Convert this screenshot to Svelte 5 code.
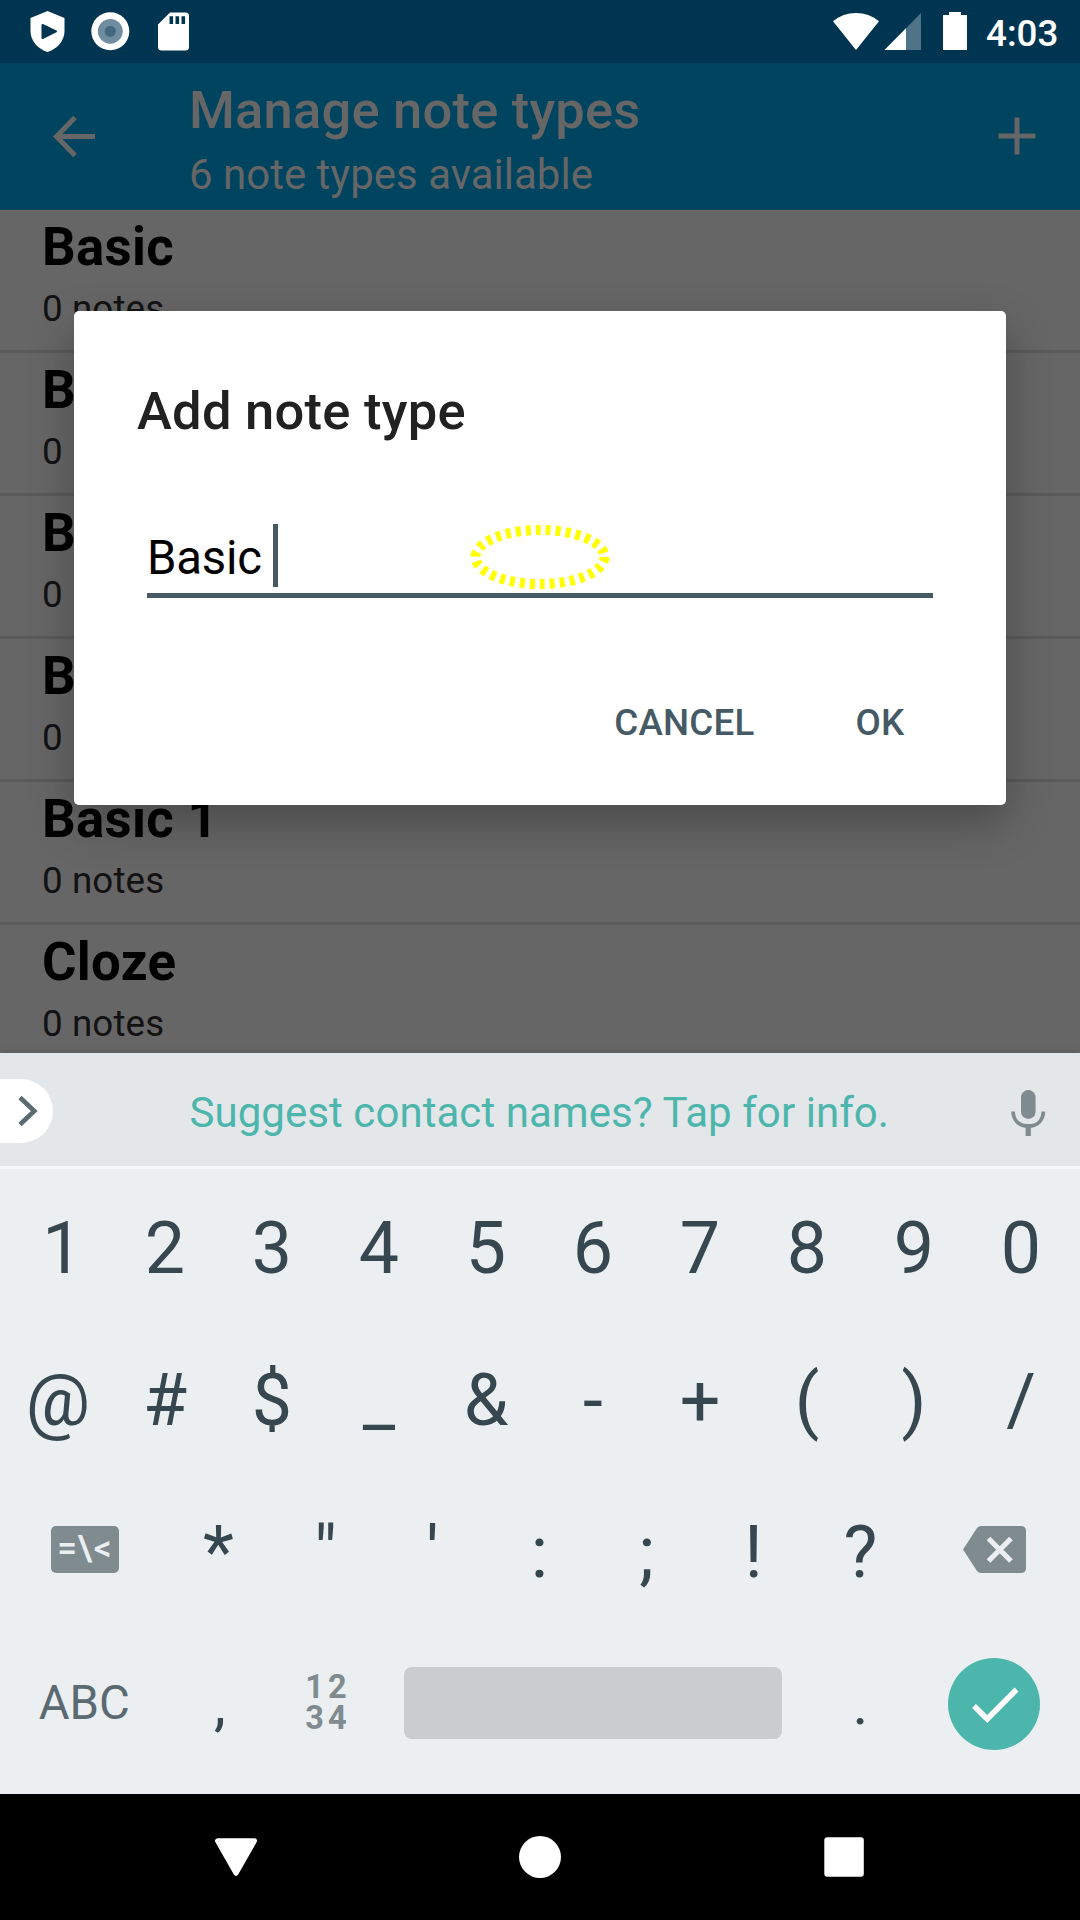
<script>
  const noteTypes = ['Basic', 'Basic (and reversed)', 'Basic (optional)', 'Basic (type in)', 'Basic 1', 'Cloze'];
  const digits = ['1', '2', '3', '4', '5', '6', '7', '8', '9', '0'];
  const symbols = ['@', '#', '$', '_', '&', '-', '+', '(', ')', '/'];
  const marks = ['*', '"', "'", ':', ';', '!', '?'];
</script>

<div class="screen">
  <header class="status">
    <svg class="left-icons" width="200" height="63" viewBox="0 0 200 63">
      <path fill="#fff" d="M47.500 11 L64.500 18 V31 C64.500 41 57 49 47.500 52 C38 49 30.500 41 30.500 31 V18 Z" />
      <path fill="#003552" stroke="#003552" stroke-width="2" stroke-linejoin="round" d="M42.500 25 L56 31.300 L42.500 38 Z" />
      <circle cx="110.300" cy="31.300" r="19" fill="#fff" />
      <circle cx="110.300" cy="31.300" r="12.400" fill="#708d9f" />
      <circle cx="110.300" cy="31.300" r="5.600" fill="#426981" />
      <path fill="#fff" d="M170 12.500 H185.500 Q189 12.500 189 16 V47 Q189 50.500 185.500 50.500 H161.500 Q158 50.500 158 47 V24.500 Z" />
      <path fill="#003552" d="M169.500 16.300h3.600v7.700h-3.600z M175.500 16.300h3.600v7.700h-3.600z M181.500 16.300h3.600v7.700h-3.600z" />
    </svg>
    <svg class="right-icons" width="140" height="63" viewBox="830 0 140 63">
      <path fill="#fff" d="M833 21.300 Q843 13 856 13 Q869 13 879 21.300 L856 50 Z" />
      <path fill="#4f7388" d="M921 13 V50 H884.500 Z" />
      <path fill="#fff" d="M906 28.300 V50 H884.500 Z" />
      <path fill="#fff" d="M949 12 H961 V15 H967 V50 H943 V15 H949 Z" />
    </svg>
    <span class="clock">4:03</span>
  </header>

  <div class="toolbar">
    <svg class="back" width="44" height="44" viewBox="52 115 44 44">
      <path fill="none" stroke="#666" stroke-width="5" d="M95 136.500 H57 M75 117.500 L56.500 136.500 L75 155.500" />
    </svg>
    <div class="titles">
      <h1>Manage note types</h1>
      <p>6 note types available</p>
    </div>
    <svg class="plus" width="38" height="38" viewBox="0 0 38 38">
      <path fill="none" stroke="#666" stroke-width="5" d="M.500 19 H37.500 M19 .500 V37.500" />
    </svg>
  </div>

  <main class="list">
    {#each noteTypes as name}
      <div class="item">
        <b>{name}</b>
        <span>0 notes</span>
      </div>
    {/each}
  </main>

  <section class="keyboard">
    <div class="strip">
      <div class="expand">
        <svg width="22" height="34" viewBox="0 0 22 34">
          <path fill="none" stroke="#5b6b72" stroke-width="4.600" d="M3 3.500 L17.300 17 L3 30.500" />
        </svg>
      </div>
      <span class="suggest">Suggest contact names? Tap for info.</span>
      <svg class="mic" width="36" height="48" viewBox="1010 1089 36 48">
        <rect x="1021" y="1090" width="14.600" height="29" rx="7.300" fill="#7f8b8f" />
        <path fill="none" stroke="#7f8b8f" stroke-width="3.800" d="M1013 1111.500 C1013.500 1121 1019.500 1126 1028.200 1126 C1037 1126 1043 1121 1043.400 1111.500" />
        <path stroke="#7f8b8f" stroke-width="5.200" d="M1028.200 1126 V1136" />
      </svg>
    </div>

    <div class="keys">
      <div class="row digits">
        {#each digits as key}<span class="key">{key}</span>{/each}
      </div>
      <div class="row">
        {#each symbols as key}<span class="key">{key}</span>{/each}
      </div>
      <div class="row">
        <span class="key wide"><span class="more"><i>=</i><i>\</i><i>&lt;</i></span></span>
        {#each marks as key}<span class="key">{key}</span>{/each}
        <span class="key wide">
          <svg class="erase" width="63" height="47" viewBox="0 0 63 47">
            <path fill="#7f8b8f" d="M18 0 H58 Q63 0 63 5 V42 Q63 47 58 47 H18 Q15.500 47 14 45 L0 23.500 L14 2 Q15.500 0 18 0 Z" />
            <path stroke="#ebeff2" stroke-width="5.200" d="M25.500 12.500 L48 35 M48 12.500 L25.500 35" />
          </svg>
        </span>
      </div>
      <div class="row bottom">
        <span class="key wide abc">ABC</span>
        <span class="key small comma">,</span>
        <span class="key numpad"><i>12</i><i>34</i></span>
        <span class="key spacebar"><span class="space"></span></span>
        <span class="key small">.</span>
        <span class="key wide">
          <svg class="enter" width="92" height="92" viewBox="0 0 92 92">
            <circle cx="46" cy="46" r="46" fill="#4db6ac" />
            <path fill="none" stroke="#fff" stroke-width="5.500" d="M26 48 L39.200 61 L68.500 31.500" />
          </svg>
        </span>
      </div>
    </div>
  </section>

  <nav class="nav">
    <svg width="1080" height="126" viewBox="0 0 1080 126">
      <path fill="#fff" stroke="#fff" stroke-width="5" stroke-linejoin="round" d="M217.500 46.800 H254.500 L236 79.300 Z" />
      <circle cx="540" cy="63" r="21" fill="#fff" />
      <rect x="824.300" y="43.300" width="39.500" height="39.500" rx="3" fill="#fff" />
    </svg>
  </nav>

  <div class="dialog">
    <h2>Add note type</h2>
    <div class="field"><span>Basic</span><span class="cursor"></span></div>
    <div class="actions">
      <span>CANCEL</span>
      <span>OK</span>
    </div>
    <svg class="marker" width="140" height="66" viewBox="0 0 140 66">
      <ellipse cx="70" cy="33" rx="64.500" ry="27" fill="none" stroke="#ff0" stroke-width="10" stroke-dasharray="5 5" />
    </svg>
  </div>
</div>

<style>
  :global(body) {
    margin: 0;
  }
  .screen {
    position: relative;
    display: flex;
    flex-direction: column;
    width: 1080px;
    height: 1920px;
    overflow: hidden;
    background: #666;
    font-family: Roboto, 'Liberation Sans', sans-serif;
  }
  svg {
    display: block;
    flex: none;
  }
  h1, h2, p {
    margin: 0;
  }
  i {
    font-style: normal;
  }
  .status {
    display: flex;
    flex: none;
    height: 63px;
    background: #003552;
  }
  .right-icons {
    margin-left: 630px;
  }
  .clock {
    margin-left: 16px;
    color: #fff;
    font-size: 36.75px;
    font-weight: 500;
    line-height: 67px;
  }
  .toolbar {
    display: flex;
    flex: none;
    height: 147px;
    background: #004460;
    color: #666;
  }
  .back {
    margin: 52px 0 0 52px;
  }
  .titles {
    flex: 1;
    margin-left: 93px;
    padding-top: 16px;
  }
  h1 {
    font-size: 52.5px;
    font-weight: 500;
    line-height: 62px;
    letter-spacing: 0.2px;
  }
  .titles p {
    margin-top: 9px;
    font-size: 42px;
    line-height: 50px;
  }
  .plus {
    margin: 54px 44px 0 0;
  }
  .list {
    flex: none;
    height: 843px;
    overflow: hidden;
  }
  .item {
    display: flex;
    flex-direction: column;
    box-sizing: border-box;
    height: 143px;
    padding: 6px 42px 0;
    border-bottom: 3px solid #5a5a5a;
    white-space: nowrap;
  }
  .item b {
    font-size: 52.8px;
    line-height: 62px;
    letter-spacing: 0.3px;
    color: #000;
  }
  .item span {
    margin-top: 9px;
    font-size: 36.75px;
    line-height: 44px;
    letter-spacing: 0.1px;
    color: #121212;
  }
  .keyboard {
    flex: none;
    height: 741px;
    background: #ebeff2;
    box-shadow: 0 0 8px rgba(0, 0, 0, 0.15);
  }
  .strip {
    display: flex;
    align-items: flex-start;
    height: 113px;
    border-bottom: 3px solid #f5f8fa;
    background: #e3e7ea;
  }
  .expand {
    display: flex;
    align-items: center;
    box-sizing: border-box;
    width: 52.5px;
    height: 64px;
    margin-top: 25.5px;
    padding-left: 16.5px;
    border-radius: 0 32px 32px 0;
    background: #fff;
  }
  .suggest {
    flex: 1;
    margin-left: 137px;
    color: #4db6ac;
    font-size: 42px;
    letter-spacing: 0.06px;
    line-height: 119px;
    white-space: nowrap;
  }
  .mic {
    margin: 36px 34px 0 0;
  }
  .keys {
    padding: 3.5px 5px 0 4.5px;
  }
  .row {
    display: flex;
    height: 152px;
  }
  .bottom {
    height: 149px;
  }
  .key {
    display: flex;
    align-items: center;
    justify-content: center;
    flex: none;
    box-sizing: border-box;
    width: 107px;
    color: #37474f;
    font-size: 71.7px;
    line-height: 84px;
  }
  .digits .key:first-child {
    padding-left: 9px;
  }
  .wide {
    width: 160.5px;
  }
  .more {
    display: grid;
    grid-template-columns: 19px 17px 19px;
    justify-content: center;
    width: 68px;
    height: 47px;
    margin-top: -6px;
    border-radius: 5px;
    background: #7f8b8f;
    color: #ebeff2;
    font-size: 35px;
    font-weight: 500;
    line-height: 45px;
    text-align: center;
  }
  .erase {
    margin-top: -6px;
  }
  .abc {
    padding-right: 1px;
    color: #5b6a71;
    font-size: 47.25px;
  }
  .small {
    padding-top: 2px;
    font-size: 60px;
  }
  .comma {
    padding-left: 3px;
  }
  .numpad {
    flex-direction: column;
    padding-bottom: 1px;
    color: #7f8b8f;
    font-size: 32.5px;
    font-weight: 700;
    line-height: 31px;
    letter-spacing: 4px;
    text-indent: 5px;
  }
  .spacebar {
    width: 428px;
  }
  .space {
    width: 378px;
    height: 72px;
    border-radius: 8px;
    background: #c9cdd0;
  }
  .enter {
    margin-top: 1px;
  }
  .nav {
    flex: none;
    height: 126px;
    background: #000;
  }
  .dialog {
    position: absolute;
    left: 74px;
    top: 311px;
    box-sizing: border-box;
    width: 932px;
    height: 494px;
    padding: 69px 73px 0 63px;
    border-radius: 5px;
    background: #fff;
    box-shadow: 0 18px 45px rgba(0, 0, 0, 0.28);
  }
  h2 {
    color: #212121;
    font-size: 52.5px;
    font-weight: 500;
    line-height: 62px;
    letter-spacing: 0.25px;
  }
  .field {
    display: flex;
    align-items: flex-start;
    height: 69px;
    margin: 82px 0 0 10px;
    border-bottom: 5px solid #455a64;
    color: #000;
    font-size: 47.25px;
    letter-spacing: -0.2px;
    line-height: 68px;
  }
  .cursor {
    width: 5px;
    height: 63px;
    margin-left: 11px;
    background: #455a64;
  }
  .actions {
    display: flex;
    justify-content: flex-end;
    gap: 101px;
    margin-top: 103px;
    padding-right: 28.5px;
    color: #455a64;
    font-size: 36.75px;
    font-weight: 500;
    letter-spacing: 0.2px;
    line-height: 44px;
  }
  .marker {
    position: absolute;
    left: 395.5px;
    top: 213px;
  }
</style>
